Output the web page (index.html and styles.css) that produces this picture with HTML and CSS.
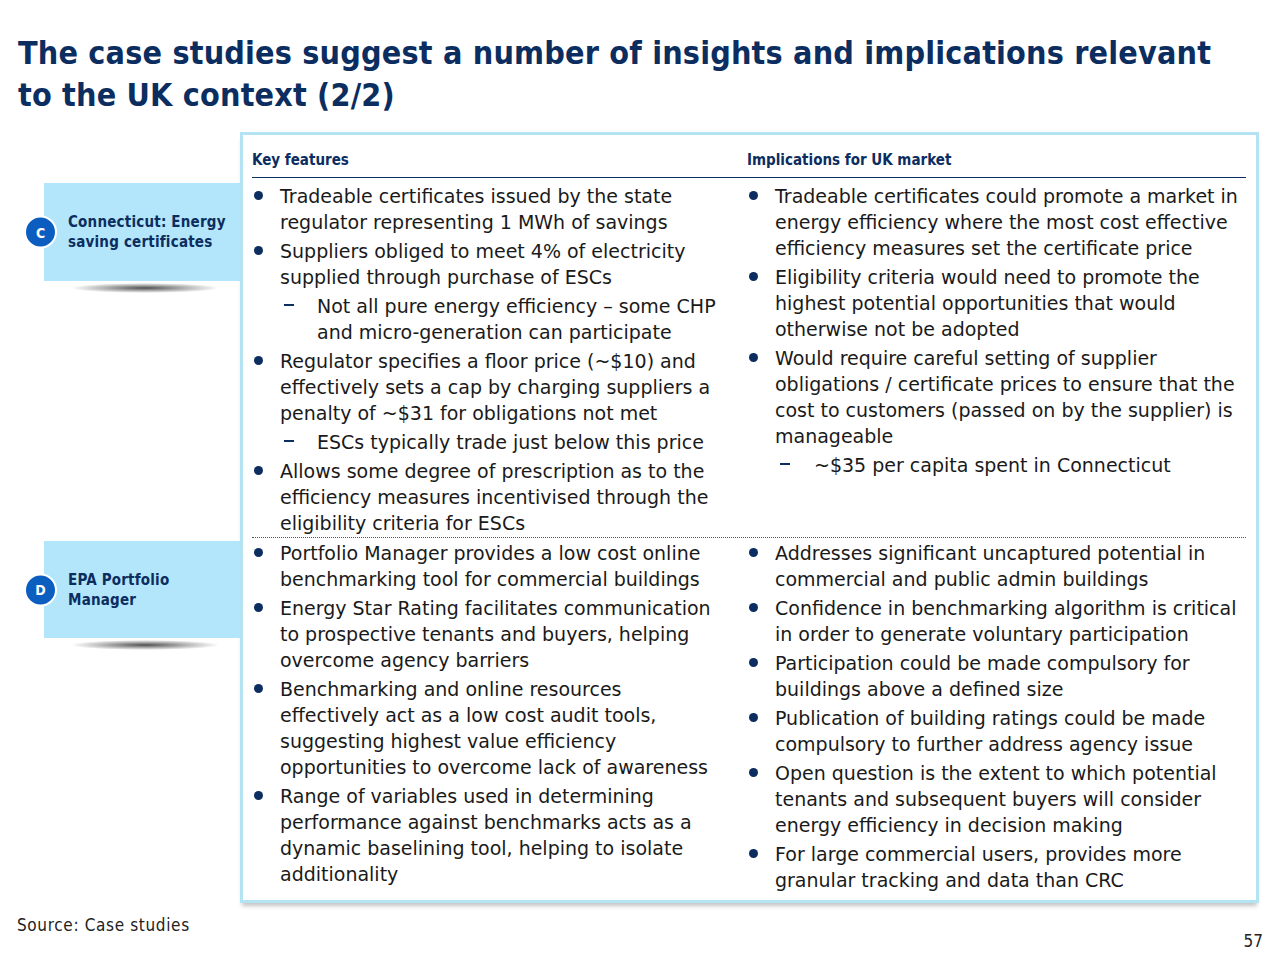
FILE: index.html
```html
<!DOCTYPE html>
<html lang="en">
<head>
<meta charset="utf-8">
<title>Case studies insights (2/2)</title>
<link rel="stylesheet" href="styles.css">
</head>
<body>
<div class="slide">
  <h1 class="title">The case studies suggest a number of insights and implications relevant to the UK context (2/2)</h1>

  <div class="content">
    <div class="labels">
      <div class="label label-c">
        <span class="badge">C</span>
        <span class="label-text">Connecticut: Energy<br>saving certificates</span>
      </div>
      <div class="label label-d">
        <span class="badge">D</span>
        <span class="label-text">EPA Portfolio<br>Manager</span>
      </div>
    </div>

    <div class="box">
      <div class="head">
        <div class="head-cell">Key features</div>
        <div class="head-cell">Implications for UK market</div>
      </div>

      <div class="row">
        <ul class="col">
          <li>Tradeable certificates issued by the state<br>regulator representing 1 MWh of savings</li>
          <li>Suppliers obliged to meet 4% of electricity<br>supplied through purchase of ESCs</li>
          <li class="sub">Not all pure energy efficiency – some CHP<br>and micro-generation can participate</li>
          <li>Regulator specifies a floor price (~$10) and<br>effectively sets a cap by charging suppliers a<br>penalty of ~$31 for obligations not met</li>
          <li class="sub">ESCs typically trade just below this price</li>
          <li>Allows some degree of prescription as to the<br>efficiency measures incentivised through the<br>eligibility criteria for ESCs</li>
        </ul>
        <ul class="col col-right">
          <li>Tradeable certificates could promote a market in<br>energy efficiency where the most cost effective<br>efficiency measures set the certificate price</li>
          <li>Eligibility criteria would need to promote the<br>highest potential opportunities that would<br>otherwise not be adopted</li>
          <li>Would require careful setting of supplier<br>obligations / certificate prices to ensure that the<br>cost to customers (passed on by the supplier) is<br>manageable</li>
          <li class="sub">~$35 per capita spent in Connecticut</li>
        </ul>
      </div>

      <div class="row row-last">
        <ul class="col">
          <li>Portfolio Manager provides a low cost online<br>benchmarking tool for commercial buildings</li>
          <li>Energy Star Rating facilitates communication<br>to prospective tenants and buyers, helping<br>overcome agency barriers</li>
          <li>Benchmarking and online resources<br>effectively act as a low cost audit tools,<br>suggesting highest value efficiency<br>opportunities to overcome lack of awareness</li>
          <li>Range of variables used in determining<br>performance against benchmarks acts as a<br>dynamic baselining tool, helping to isolate<br>additionality</li>
        </ul>
        <ul class="col col-right">
          <li>Addresses significant uncaptured potential in<br>commercial and public admin buildings</li>
          <li>Confidence in benchmarking algorithm is critical<br>in order to generate voluntary participation</li>
          <li>Participation could be made compulsory for<br>buildings above a defined size</li>
          <li>Publication of building ratings could be made<br>compulsory to further address agency issue</li>
          <li>Open question is the extent to which potential<br>tenants and subsequent buyers will consider<br>energy efficiency in decision making</li>
          <li>For large commercial users, provides more<br>granular tracking and data than CRC</li>
        </ul>
      </div>
    </div>
  </div>

  <div class="footer">
    <div class="source">Source: Case studies</div>
    <div class="page-num">57</div>
  </div>
</div>
</body>
</html>
```

FILE: styles.css
```css
* { box-sizing: border-box; }

html, body {
  margin: 0;
  padding: 0;
  background: #ffffff;
}

body {
  font-family: "DejaVu Sans", Verdana, sans-serif;
  color: #1a1a1a;
}

.slide {
  width: 1280px;
  height: 961px;
  position: relative;
  overflow: hidden;
}

.title {
  margin: 0;
  padding: 32px 50px 0 18px;
  font-stretch: condensed;
  font-weight: bold;
  font-size: 32px;
  line-height: 42px;
  letter-spacing: 0.17px;
  color: #0c2d5f;
}

.content {
  display: flex;
  margin-top: 16px;
}

.labels {
  width: 240px;
  flex: none;
  display: flex;
  flex-direction: column;
  padding-top: 51px;
}

.label {
  position: relative;
  margin-left: 44px;
  width: 196px;
  height: 98px;
  background: #b3e6fa;
  display: flex;
  align-items: center;
  padding-left: 24px;
  padding-right: 4px;
}

.label::after {
  content: "";
  position: absolute;
  left: 28px;
  right: 22px;
  bottom: -12px;
  height: 10px;
  border-radius: 50%;
  background: radial-gradient(ellipse at center, rgba(50,50,50,0.85) 0%, rgba(90,90,90,0.45) 40%, rgba(255,255,255,0) 72%);
}

.label-d {
  margin-top: 260px;
  height: 97px;
}

.badge {
  position: absolute;
  left: -20px;
  top: 50%;
  transform: translateY(-50%);
  width: 33px;
  height: 33px;
  border-radius: 50%;
  background: #0b5ec0;
  border: 2px solid #ffffff;
  color: #ffffff;
  font-stretch: condensed;
  font-weight: bold;
  font-size: 14px;
  display: flex;
  align-items: center;
  justify-content: center;
}

.label-text {
  font-stretch: condensed;
  font-weight: bold;
  font-size: 15px;
  line-height: 20px;
  letter-spacing: 0.2px;
  color: #0c2d5f;
  white-space: nowrap;
}

.box {
  width: 1019px;
  flex: none;
  border: 3px solid #b4e4f4;
  background: #ffffff;
  padding: 0 10px 7px 9px;
  box-shadow: 0 5px 4px -2px rgba(90,90,90,0.35);
}

.head {
  display: grid;
  grid-template-columns: 495px 1fr;
  border-bottom: 1px solid #0c2d5f;
  padding-top: 15px;
  padding-bottom: 7px;
}

.head-cell {
  font-stretch: condensed;
  font-weight: bold;
  font-size: 15px;
  line-height: 20px;
  color: #0c2d5f;
}

.row {
  display: grid;
  grid-template-columns: 495px 1fr;
  padding: 5px 0 1px;
  border-bottom: 1px dotted #555555;
}

.row-last {
  border-bottom: none;
  padding-top: 2px;
  padding-bottom: 0;
}

.col {
  list-style: none;
  margin: 0;
  padding: 0;
  font-size: 19px;
  line-height: 26px;
  color: #1a1a1a;
  white-space: nowrap;
}

.col li {
  position: relative;
  padding-left: 28px;
  margin-top: 3px;
}

.col li:first-child {
  margin-top: 0;
}

.col li::before {
  content: "";
  position: absolute;
  left: 2px;
  top: 8px;
  width: 9px;
  height: 9px;
  border-radius: 50%;
  background: #0c2d5f;
}

.col li.sub {
  padding-left: 65px;
}

.col-right li.sub {
  padding-left: 67px;
}

.col li.sub::before {
  left: 32px;
  top: 11px;
  width: 10px;
  height: 2px;
  border-radius: 0;
}

.col-right li.sub::before {
  left: 33px;
}

.footer {
  display: flex;
  justify-content: space-between;
  align-items: flex-start;
  padding: 12px 17px 0 17px;
}

.source {
  font-stretch: condensed;
  font-size: 17px;
  line-height: 20px;
  color: #222222;
  letter-spacing: 0.65px;
}

.page-num {
  font-stretch: condensed;
  font-size: 17px;
  line-height: 20px;
  color: #222222;
  margin-top: 16px;
}
```
